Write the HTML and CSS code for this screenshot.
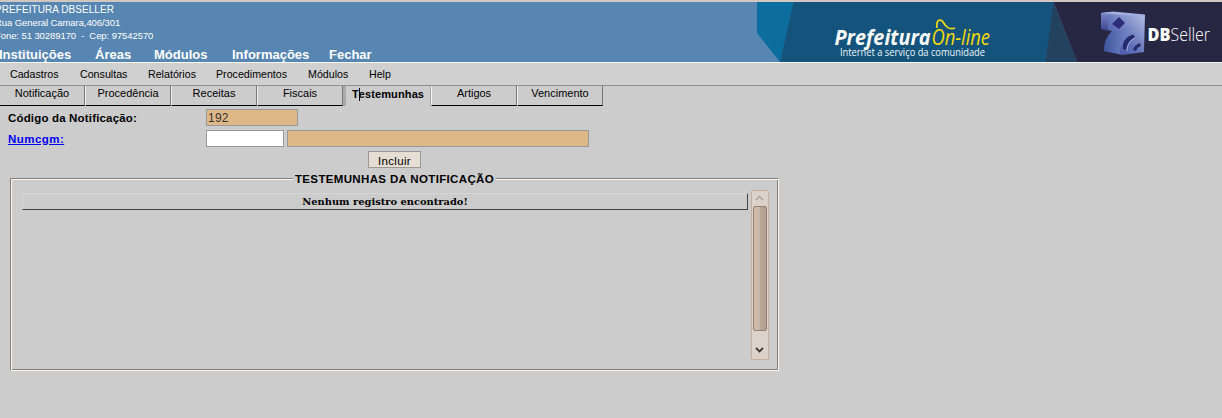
FILE: index.html
```html
<!DOCTYPE html>
<html lang="pt-BR">
<head>
<meta charset="utf-8">
<title>DBSeller - Notificação</title>
<link rel="stylesheet" href="styles.css">
</head>
<body>
<header class="header">
  <div class="header-left">
    <div class="org name">PREFEITURA DBSELLER</div>
    <div class="org addr">Rua General Camara,406/301</div>
    <div class="org phone">Fone: 51 30289170 &nbsp;- &nbsp;Cep: 97542570</div>
    <nav class="main-nav">
      <a class="n1">Instituições</a><a class="n2">Áreas</a><a class="n3">Módulos</a><a class="n4">Informações</a><a class="n5">Fechar</a>
    </nav>
  </div>
  <svg class="banner" width="465" height="60" viewBox="757 2 465 60">
    <defs>
      <linearGradient id="cube" x1="0" y1="1" x2="1" y2="0">
        <stop offset="0" stop-color="#34439a"/><stop offset=".45" stop-color="#6272b8"/><stop offset="1" stop-color="#b4c0e4"/>
      </linearGradient>
      <linearGradient id="face" x1="0" y1="0" x2="0" y2="1">
        <stop offset="0" stop-color="#7d88c8"/><stop offset="1" stop-color="#3b458f"/>
      </linearGradient>
      <linearGradient id="front" x1="0" y1="0" x2="1" y2="0">
        <stop offset="0" stop-color="#3f559f"/><stop offset="1" stop-color="#8294d0"/>
      </linearGradient>
    </defs>
    <path fill="#0b6e9e" d="M757 2H794L780 62L757 33Z"/>
    <path fill="#14547c" d="M793.500 2H1054L1046 62H780Z"/>
    <path fill="#224260" d="M1053.500 2L1077 62H1045.500Z"/>
    <path fill="#272643" d="M1053.500 2H1222V62H1077Z"/>
    <text class="brand" x="834.500" y="45" textLength="96" lengthAdjust="spacingAndGlyphs">Prefeitura</text>
    <text class="brand-online" x="931.500" y="45" textLength="58.500" lengthAdjust="spacingAndGlyphs">On-line</text>
    <path class="swoosh" d="M937 28C936 20 940 18 943 22C946 27 949 30 955 28"/>
    <text class="slogan" x="840" y="56" textLength="145" lengthAdjust="spacingAndGlyphs">Internet a serviço da comunidade</text>
    <path fill="url(#face)" d="M1101 13L1109 12L1109 31L1101 29Z"/>
    <path fill="url(#cube)" d="M1108 12L1145 15L1144 52L1122 55L1104 51Q1103 41 1112 31L1108 30Z"/>
    <path fill="#a3aee0" d="M1101 13L1113 11.500L1145 14.500L1144 16L1120 15Z"/>
    <path fill="url(#front)" d="M1112 31Q1104 39 1104 51L1120 54Q1120 40 1136 27L1128 26L1119 31Z"/>
    <path fill="#2c2c78" d="M1119 17L1125 23L1119 29L1112 24Z"/>
    <path fill="#252a6c" d="M1123 49Q1122 38 1133 34.500L1135 37Q1127 41 1126 50Z"/>
    <path fill="#252a6c" d="M1133 50Q1134 45 1140 43L1141 46Q1137 47 1136 51Z"/>
    <path fill="none" stroke="#a9b9e6" stroke-width=".8" d="M1127 51Q1127 42 1135 38"/>
    <text class="db" x="1147.500" y="41" textLength="23" lengthAdjust="spacingAndGlyphs">DB</text>
    <text class="seller" x="1170.500" y="41" textLength="39.500" lengthAdjust="spacingAndGlyphs">Seller</text>
  </svg>
</header>
<nav class="sub-nav">
  <a class="s1">Cadastros</a><a class="s2">Consultas</a><a class="s3">Relatórios</a><a class="s4">Procedimentos</a><a class="s5">Módulos</a><a class="s6">Help</a>
</nav>
<div class="tabs">
  <div class="tab first">Notificação</div>
  <div class="tab">Procedência</div>
  <div class="tab">Receitas</div>
  <div class="tab">Fiscais</div>
  <div class="tab active">T<i class="caret"></i>estemunhas</div>
  <div class="tab">Artigos</div>
  <div class="tab">Vencimento</div>
</div>
<main class="form">
  <div class="row">
    <label class="label code">Código da Notificação:</label>
    <div class="field tan w-code">192</div>
  </div>
  <div class="row">
    <div class="label"><a class="link">Numcgm:</a></div>
    <div class="field w-num"></div>
    <div class="field tan w-name"></div>
  </div>
  <div class="button">Incluir</div>
  <section class="group">
    <div class="legend"><span>TESTEMUNHAS DA NOTIFICAÇÃO</span></div>
    <div class="group-body">
      <div class="empty"><span>Nenhum registro encontrado!</span></div>
      <div class="scroll">
        <svg class="arrow" width="9" height="6" viewBox="0 0 9 6"><path d="M1 5L4.500 1.500L8 5" fill="none" stroke="#aaa198" stroke-width="1.500"/></svg>
        <div class="thumb"></div>
        <svg class="arrow down" width="9" height="6" viewBox="0 0 9 6"><path d="M1 1L4.500 4.500L8 1" fill="none" stroke="#3e3a36" stroke-width="1.800"/></svg>
      </div>
    </div>
  </section>
</main>
</body>
</html>
```
FILE: styles.css
```css
* { box-sizing: border-box; }
body {
  margin: 0;
  width: 1222px;
  height: 418px;
  overflow: hidden;
  background: #ccc;
  color: #000;
  font-family: "Liberation Sans", Arial, sans-serif;
  font-size: 11px;
}
.header {
  display: flex;
  height: 63px;
  border-top: 2px solid #d1c7c0;
  border-bottom: 1px solid #f6f6f6;
  background: #5786b2;
}
.header-left { width: 757px; color: #fff; }
.org { height: 13px; line-height: 15px; font-size: 9.5px; white-space: pre; margin-left: -5px; }
.name { font-size: 10px; letter-spacing: 0.06px; }
.phone { letter-spacing: -0.08px; }
.addr { letter-spacing: -0.08px; }
.main-nav {
  display: flex;
  margin-top: 5px;
  font-size: 13px;
  font-weight: bold;
  line-height: 17px;
  white-space: nowrap;
}
.n1 { width: 96px; margin-left: -1px; }
.n2 { width: 59px; }
.n3 { width: 78px; }
.n4 { width: 97px; }
.banner { display: block; }
.brand, .brand-online, .slogan { font-family: "Open Sans", sans-serif; }
.brand { font-size: 20.5px; font-weight: 700; font-style: italic; fill: #fff; }
.brand-online { font-size: 21px; font-style: italic; fill: #f3d90f; }
.slogan { font-size: 10px; font-weight: 500; fill: #eef4f8; }
.swoosh { fill: none; stroke: #f3d90f; stroke-width: 1.7; }
.db, .seller { fill: #fff; }
.db { font-family: "Open Sans", sans-serif; font-size: 17px; font-weight: 800; }
.seller { font-family: "Open Sans", sans-serif; font-size: 18px; font-weight: 300; }
.sub-nav {
  display: flex;
  height: 23px;
  padding-left: 10px;
  line-height: 23px;
  background: #d0d0d0;
  border-bottom: 1px solid #909090;
  font-size: 10.67px;
}
.s1 { width: 70px; }
.s2 { width: 68px; }
.s3 { width: 68px; }
.s4 { width: 92px; }
.s5 { width: 61px; }
.tabs { display: flex; height: 20px; font-size: 11px; line-height: 15px; text-align: center; }
.tab {
  width: 86px;
  height: 20px;
  border-left: 1px solid #f2f2f2;
  border-right: 1px solid #777;
  border-bottom: 1px solid #000;
}
.tab.first { width: 85px; border-left: 0; }
.tab.active {
  width: 88px;
  border-left: 3px solid #aaa;
  border-right: 1px solid #aaa;
  border-bottom: 0;
  font-weight: bold;
  letter-spacing: 0.12px;
  line-height: 17px;
}
.caret {
  display: inline-block;
  width: 1px;
  height: 13px;
  margin-right: -1px;
  vertical-align: -3px;
  background: #000;
}
.form { padding: 3px 0 0 8px; }
.row { display: flex; height: 21px; }
.label { width: 198px; font-weight: bold; font-size: 11.5px; letter-spacing: 0.17px; line-height: 18px; white-space: nowrap; }
.link { color: #00e; text-decoration: underline; letter-spacing: 0.45px; }
.field { height: 17px; border: 1px solid #999; background: #fff; }
.tan { background: #deb887; }
.w-code { width: 92px; padding-left: 1px; font-size: 12px; letter-spacing: 0.25px; line-height: 17px; color: #333; }
.w-num { width: 78px; margin-right: 3px; }
.w-name { width: 302px; }
.button {
  width: 53px;
  height: 17px;
  margin-left: 360px;
  border: 1px solid #999;
  background: #e6ddd3;
  font-size: 11.5px;
  letter-spacing: 0.3px;
  line-height: 18px;
  text-align: center;
}
.group {
  width: 769px;
  height: 193px;
  margin: 10px 0 0 2px;
  border: 1px solid #857e79;
  border-right-color: #faf5f0;
  border-bottom-color: #faf5f0;
  box-shadow: inset 1px 1px #faf5f0, inset -1px -1px #857e79;
}
.legend { height: 16px; margin-top: -8px; margin-bottom: 8px; text-align: center; }
.legend span {
  display: inline-block;
  padding: 0 2px;
  background: #ccc;
  font-weight: bold;
  font-size: 11.5px;
  letter-spacing: 0.35px;
  line-height: 16px;
  white-space: nowrap;
}
.group-body { display: flex; padding-left: 11px; margin-top: -5px; }
.empty {
  width: 726px;
  height: 17px;
  margin: 3px 3px 0 0;
  border: 1px solid #d6d6d6;
  border-right-color: #444;
  border-bottom-color: #444;
  text-align: center;
  font: bold 9.9px/15px "DejaVu Serif", serif;
}
.scroll {
  display: flex;
  flex-direction: column;
  align-items: center;
  width: 18px;
  height: 170px;
  border: 1px solid #c6ae9d;
  border-radius: 2px;
  background: #ddd2ca;
}
.arrow { display: block; margin-top: 4px; margin-right: 1px; }
.thumb {
  width: 14px;
  height: 125px;
  margin-top: 5px;
  border: 1px solid #947f70;
  border-radius: 2px;
  background: linear-gradient(90deg, #cdbbae 0, #c8b6a9 50%, #bca897 51%, #b39f8f 100%);
}
.down { margin-top: 16px; }
```
